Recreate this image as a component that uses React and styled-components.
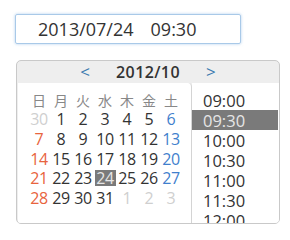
import React from 'react'
import styled, { createGlobalStyle } from 'styled-components'

const GlobalStyle = createGlobalStyle`
body{
  margin: 0;
  background: #fff;
  font-family: "Open Sans", "Noto Sans CJK JP", sans-serif;
  color: #333;
}
`
const Page = styled.div`
padding: 14px 0 0 15px;
`
const Input = styled.div`
box-sizing: border-box;
width: 226px;
height: 30px;
border: 1px solid #a9c9e8;
border-radius: 2px;
box-shadow: 0 0 3px rgba(110, 165, 220, 0.55);
padding-left: 22px;
display: flex;
gap: 17px;
font-size: 18px;
line-height: 28px;
color: #333;
`
const Panel = styled.div`
box-sizing: border-box;
margin: 16px 0 0 1px;
width: 264px;
height: 164px;
border: 1px solid #c9c9c9;
border-radius: 5px;
background: #eee;
display: flex;
flex-direction: column;
overflow: hidden;
`
const Header = styled.div`
height: 22px;
display: flex;
justify-content: center;
align-items: center;
gap: 26px;
`
const Nav = styled.span`
color: #3c7bb0;
font-size: 17px;
line-height: 22px;
`
const Title = styled.span`
font-weight: 600;
font-size: 16px;
letter-spacing: 0.4px;
color: #333;
line-height: 22px;
`
const Body = styled.div`
flex: 1;
display: flex;
min-height: 0;
padding: 0 0 0 1px;
`
const Calendar = styled.div`
box-sizing: border-box;
width: 174px;
background: #fff;
border-right: 1px solid #d4d4d4;
border-top-right-radius: 4px;
padding: 7px 0 0 10px;
display: grid;
grid-template-columns: repeat(7, 22px);
grid-auto-rows: 19.6px;
align-content: start;
`
const Week = styled.div`
font-family: "Noto Sans CJK JP", sans-serif;
font-size: 14px;
color: #888;
display: flex;
align-items: center;
justify-content: center;
`
const Day = styled.div`
font-size: 16px;
display: flex;
align-items: center;
justify-content: center;
letter-spacing: -0.3px;
color: ${p => p.$out ? '#cfcfcf' : p.$sun ? '#e8643e' : p.$sat ? '#3f7fcd' : '#333'};
span{
  display: block;
  width: 21px;
  text-align: center;
  line-height: 16px;
  background: ${p => p.$sel ? '#7a7a7a' : 'transparent'};
  color: ${p => p.$sel ? '#e6e6e6' : 'inherit'};
}
`
const Times = styled.div`
flex: 1;
background: #fff;
overflow-y: scroll;
padding-top: 7px;
&::-webkit-scrollbar{
  width: 4px;
}
&::-webkit-scrollbar-track{
  background: #fff;
}
&::-webkit-scrollbar-thumb{
  background: #9a9a9a;
}
`
const Time = styled.div`
height: 20px;
display: flex;
align-items: center;
margin-right: 1px;
padding-left: 11px;
font-size: 16.5px;
color: ${p => p.$sel ? '#e6e6e6' : '#333'};
background: ${p => p.$sel ? '#7a7a7a' : 'transparent'};
`

const weeks = ['日', '月', '火', '水', '木', '金', '土']

const days = [
  { d: 30, out: true },
  ...Array.from({ length: 31 }, (_, i) => ({ d: i + 1 })),
  { d: 1, out: true }, { d: 2, out: true }, { d: 3, out: true }
]

const times = []
for (let h = 9; h < 16; h++) {
  const hh = String(h).padStart(2, '0')
  times.push(hh + ':00', hh + ':30')
}

const App = () => {
  return (
    <Page>
      <GlobalStyle />
      <Input>
        <span>2013/07/24</span>
        <span>09:30</span>
      </Input>
      <Panel>
        <Header>
          <Nav>&lt;</Nav>
          <Title>2012/10</Title>
          <Nav>&gt;</Nav>
        </Header>
        <Body>
          <Calendar>
            {weeks.map(w => <Week key={w}>{w}</Week>)}
            {days.map((item, i) => (
              <Day
                key={i}
                $out={item.out}
                $sun={i % 7 === 0}
                $sat={i % 7 === 6}
                $sel={!item.out && item.d === 24}
              >
                <span>{item.d}</span>
              </Day>
            ))}
          </Calendar>
          <Times>
            {times.map(t => <Time key={t} $sel={t === '09:30'}>{t}</Time>)}
          </Times>
        </Body>
      </Panel>
    </Page>
  )
}

export default App
